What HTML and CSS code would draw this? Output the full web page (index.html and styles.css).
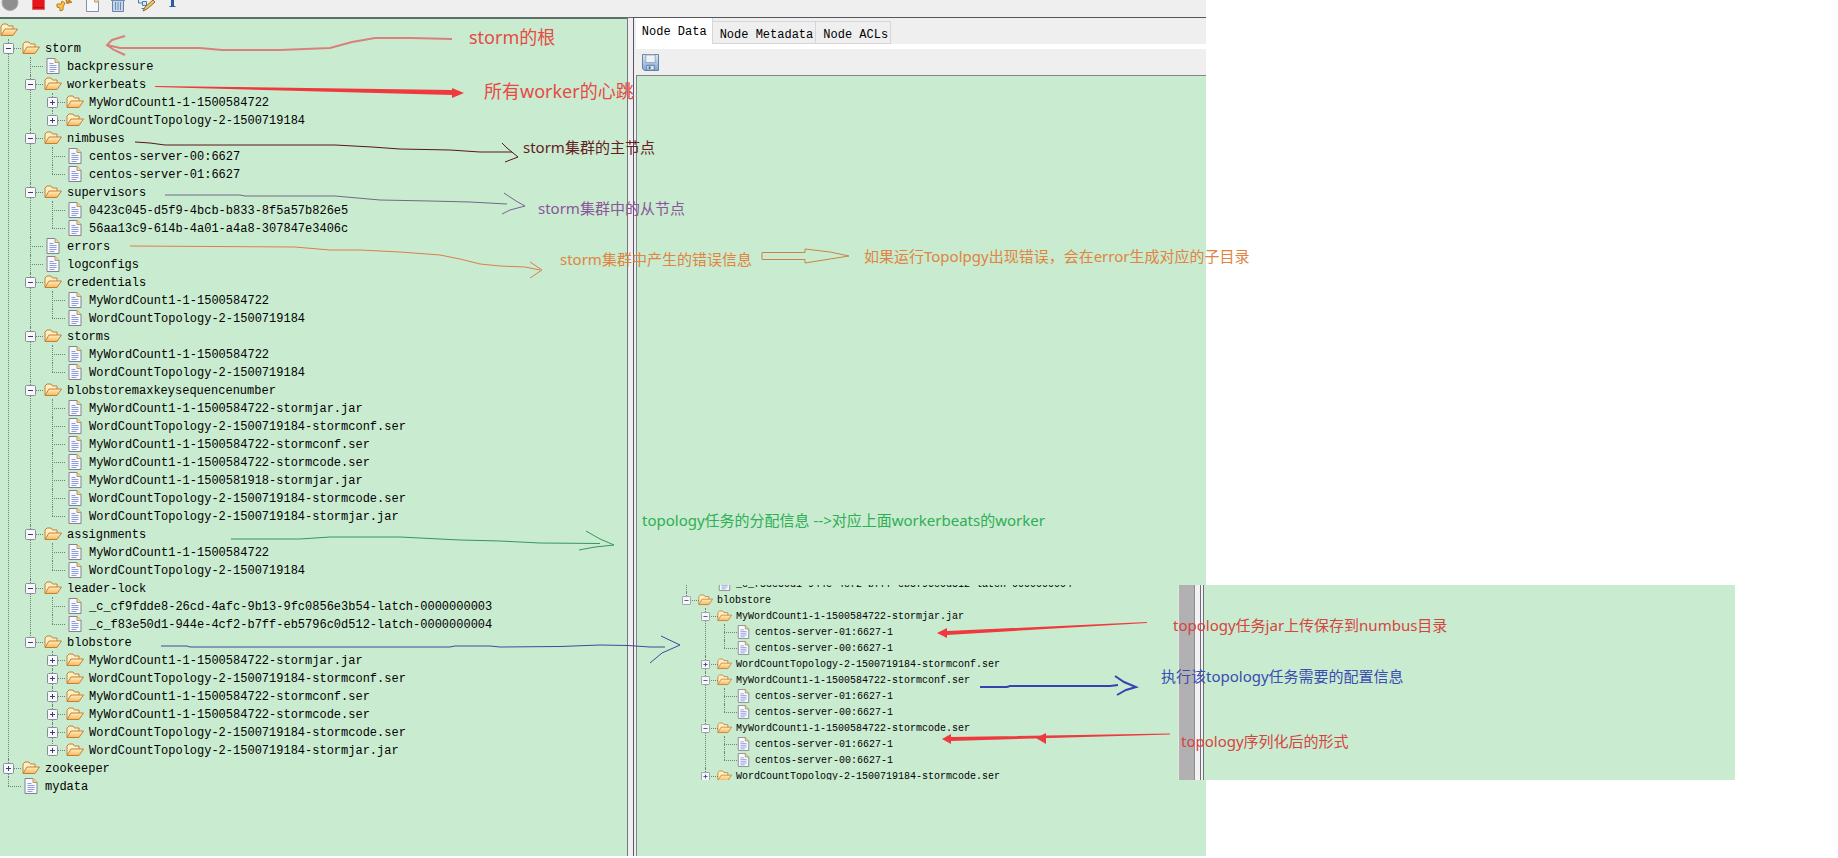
FILE: index.html
```html
<!DOCTYPE html>
<html lang="zh-CN">
<head>
<meta charset="utf-8">
<title>ZooKeeper Inspector</title>
<link rel="stylesheet" href="styles.css">
</head>
<body>
<svg class="defs" aria-hidden="true">
  <defs>
    <linearGradient id="fold" x1="0" y1="0" x2="0" y2="1"><stop offset="0" stop-color="#fff0c0"/><stop offset="1" stop-color="#fbb659"/></linearGradient>
    <linearGradient id="disk" x1="0" y1="0" x2="0" y2="1"><stop offset="0" stop-color="#dce8f4"/><stop offset="1" stop-color="#7fa3cf"/></linearGradient>
    <symbol id="folder" viewBox="0 0 18 14">
      <path d="M1 12V3l2-2h4l1.500 2H13v3" fill="#fff0c4" stroke="#c08038"/>
      <path d="M1 12.500 5 6h12.500L13 12.500z" fill="url(#fold)" stroke="#c08038"/>
    </symbol>
    <symbol id="file" viewBox="0 0 13 16">
      <path d="M.5.5h8l4 4v11H.5z" fill="#f8f9ff" stroke="#85818c"/>
      <path d="M8.500.5v4h4" fill="#f5d68c" stroke="#b39a55"/>
      <path d="M3 5.500h4M3 7.500h7M3 9.500h7M3 11.500h7M3 13.500h5" stroke="#8f9cdd"/>
    </symbol>
  </defs>
</svg>
<main class="stage">
  <section class="app">
    <header class="toolbar">
      <button class="tool" aria-label="Connect"><svg viewBox="0 0 20 12"><circle cx="10" cy="2.500" r="8" fill="#8f8f8f" stroke="#a8a8a8"/></svg></button>
      <button class="tool" aria-label="Disconnect"><svg viewBox="0 0 20 12"><path d="M5.500-3h12V9.500h-12z" fill="#e8161c" stroke="#d66"/><path d="M6 7.500h11" stroke="#b50d12"/></svg></button>
      <button class="tool" aria-label="Refresh"><svg viewBox="0 0 20 12"><path d="M3 4 7 4 8 1 11 3 9 7 9 10 6 11 6 8 3 7z" fill="#f6c34c" stroke="#bd7d1c"/><path d="M12-1l1 4 5-1M14 2l4-4" fill="#f6c34c" stroke="#bd7d1c" stroke-width="1.500"/></svg></button>
      <button class="tool" aria-label="New node"><svg viewBox="0 0 20 12"><path d="M5.500-3h8l4 4v10.500h-12z" fill="#f5f8ff" stroke="#8d8f9e"/><path d="M13.500-2v4h4" fill="#f7d26b" stroke="#c6a24c"/></svg></button>
      <button class="tool" aria-label="Delete node"><svg viewBox="0 0 20 12"><path d="M4.500-2v13.500h11V-2" fill="#c6d6ec" stroke="#6a84a8"/><path d="M3 .5h14M7.500 2v8M10 2v8M12.500 2v8" stroke="#6f8cb5"/></svg></button>
      <button class="tool" aria-label="Edit viewers"><svg viewBox="0 0 20 12"><path d="M3.500-1v4h4M7.500 1.500h4v4h-4zM6.500 8.500h3" fill="#dbe8f8" stroke="#4c79ad"/><path d="m8 11 2-4 8-7 2 2-8 7z" fill="#f2c766" stroke="#8a6a32"/></svg></button>
      <button class="tool" aria-label="About"><svg viewBox="0 0 20 12"><path d="M9-2h3v8h1.500v1h-6V6H9z" fill="#2b5c9e"/></svg></button>
    </header>
    <div class="panes">
      <nav class="pane-tree" aria-label="Nodes"><div class="root-row"><svg class="folder"><use href="#folder"/></svg></div><ul class="tree" id="main-tree"></ul></nav>
      <div class="splitter"></div>
      <section class="detail">
        <div class="tabs" role="tablist">
          <button class="tab active" role="tab" aria-selected="true">Node Data</button>
          <button class="tab" role="tab" aria-selected="false">Node Metadata</button>
          <button class="tab" role="tab" aria-selected="false">Node ACLs</button>
        </div>
        <div class="strip"></div>
        <div class="actions"><button class="save" aria-label="Save"><svg viewBox="0 0 18 18"><path d="M.5.5h17v17H2.500l-2-2z" fill="url(#disk)" stroke="#5a7ba6"/><path d="M4 1h10v8H4z" fill="#eef2f2" stroke="#8fa9c6"/><path d="M5 12h8v5H5z" fill="#dbe5f0" stroke="#5a7ba6"/><path d="M7 13h2v3H7z" fill="#456b9a"/></svg></button></div>
        <div class="editor"></div>
      </section>
    </div>
  </section>

  <section class="inset">
    <ul class="tree small" id="inset-tree"></ul>
    <div class="scrollbar"></div>
    <div class="inset-split"></div>
    <div class="inset-body"></div>
  </section>

  <svg class="ink" aria-hidden="true">
    <g fill="none">
      <path stroke="#d9807c" stroke-width="2" d="M452 39 412 38H375L352 42 330 48 280 50H222L200 48H120L107 45M125 36 112 40 107 45 114 50 125 55"/>
      <path stroke="#5c1419" d="M135 142 150 143 165 145H335L372 147 400 149 450 150 480 152H512M502 143 507 148 518 157 505 162"/>
      <path stroke="#6f6a86" d="M165 195H240L245 196H335L380 200 430 201 470 202 507 204"/>
      <path stroke="#7a6390" d="M504 193 516 201 525 206 510 210 502 214"/>
      <path stroke="#dd7d49" d="M130 246 295 247 330 250H360L400 252 440 255 460 259 480 264 500 266 525 267 540 270M530 262 542 270 530 278"/>
      <path stroke="#c98445" d="M762 252.500H805V249L830 252 849 256 830 259 805 263V259.500H762z"/>
      <path stroke="#34985a" d="M231 539H300L330 537H400L460 540 500 541 540 543 600 543.500M586 531 600 539 614 545 595 547 579 550"/>
      <path stroke="#3a4c9c" d="M161 646H187L190 647H450L455 646H490L500 647 560 646.500 600 645 628 645.500 650 647H665M661 636 680 645 662 653 650 663"/>
      <path stroke="#3443b3" stroke-width="2" d="M980 687H1007L1010 686H1110L1118 685M1115 676 1124 682 1136 687 1126 690 1117 695"/>
    </g>
    <g fill="#ee3a3e">
      <path d="m155 86 297 4v-2l12 5-12 5v-3L155 87z"/>
      <path d="m937 633 10-5v3l200-9v1l-200 12v3z"/>
      <path d="m942 739 9-5v3l219-3.500v1L951 741v3z"/>
      <path d="m1036 738 10-5v11z"/>
    </g>
  </svg>
  <p class="note big red n-root">storm的根</p>
  <p class="note big red n-beats">所有worker的心跳</p>
  <p class="note maroon n-nimbus">storm集群的主节点</p>
  <p class="note purple n-super">storm集群中的从节点</p>
  <p class="note orange n-errors">storm集群中产生的错误信息</p>
  <p class="note orange n-topo">如果运行Topolpgy出现错误，会在error生成对应的子目录</p>
  <p class="note green n-assign">topology任务的分配信息 --&gt;对应上面workerbeats的worker</p>
  <p class="note crimson n-jar">topology任务jar上传保存到numbus目录</p>
  <p class="note blue n-conf">执行该topology任务需要的配置信息</p>
  <p class="note crimson n-code">topology序列化后的形式</p>
</main>
<script src="tree.js"></script>
</body>
</html>
```
FILE: styles.css
```css
* { box-sizing: border-box; }
body { margin: 0; background: #fff; font-family: "Liberation Mono", "DejaVu Sans Mono", monospace; font-size: 12px; color: #000; }
button { margin: 0; padding: 0; border: 0; background: none; font: inherit; color: inherit; }
ul { list-style: none; margin: 0; padding: 0; }
.defs { position: absolute; width: 0; height: 0; }
.stage { position: relative; min-height: 100vh; overflow: hidden; }

.app { display: flex; flex-direction: column; width: 65.6%; min-height: calc(100vh - 2px); background: #efefef; }
.toolbar { display: flex; gap: 7px; height: 17px; overflow: hidden; }
.tool { width: 20px; height: 12px; }
.tool svg { display: block; width: 20px; height: 12px; }

.panes { display: grid; grid-template-columns: 628fr 5px 573fr; flex: 1; }
.pane-tree { background: #c9ebd0; border-top: 2px solid #5f6f68; border-right: 1px solid #77777f; padding-top: 2px; }
.splitter { border-top: 1px solid #66666c; }
.detail { display: flex; flex-direction: column; border-top: 1px solid #55555c; border-left: 1px solid #5d5068; padding-left: 2px; }
.tabs { display: flex; align-items: flex-end; height: 26px; background: #efefef; }
.tab { height: 23px; padding: 4px 2px 0 7px; border: 1px solid #d5d5da; border-left: 0; }
.tab.active { height: 26px; padding: 2px 5px 0 6px; background: #fff; border-width: 0 1px 0 0; }
.strip { height: 5px; background: #fff; }
.actions { display: flex; align-items: center; height: 26px; padding-left: 6px; }
.save, .save svg { display: block; width: 17px; height: 17px; }
.editor { flex: 1; background: #c9ebd0; border-top: 1px solid #81848b; border-left: 1px solid #81848b; }

.root-row { display: flex; align-items: center; height: 18px; }
.folder { display: block; width: 18px; height: 14px; }
.file { display: block; width: 18px; height: 16px; }
.tree { --row: 18px; --line: 20px; --mid: 9px; --indent: 22px; --box: 11px; --lead: 3px; --gap: 8px; --text: 5px; --axis: 8px; }
.tree ul { padding-left: var(--indent); }
.tree li { position: relative; }
.tree li::before { content: ""; position: absolute; left: var(--axis); top: 0; bottom: 0; border-left: 1px dotted #6f8476; }
.tree li:last-child::before { bottom: auto; height: var(--mid); }
.row { position: relative; display: flex; align-items: center; height: var(--row); padding-left: var(--lead); white-space: nowrap; }
.row::before { content: ""; position: absolute; left: var(--axis); top: var(--mid); width: 13px; border-top: 1px dotted #6f8476; }
.toggle { position: relative; display: block; width: var(--box); height: var(--box); margin-right: var(--gap); }
.toggle svg { display: block; width: var(--box); height: var(--box); }
.row .name { padding: 2px 0 0 var(--text); line-height: var(--row); }
.small { --row: 16px; --mid: 8px; --indent: 19px; --box: 9px; --lead: 0px; --gap: 7px; --text: 4px; --axis: 4px; font-size: 10px; }
.small .folder { width: 15px; height: 12px; }
.small .file { width: 15px; height: 14px; }

.inset { position: absolute; left: 682px; top: 585px; display: flex; width: 1053px; height: 195px; overflow: hidden; background: #c9ebd0; }
.inset .tree { width: 496px; margin-top: -9px; }
.scrollbar { width: 16px; background: #b1b1b1; border-left: 1px solid #e6e6e6; }
.inset-split { width: 10px; background: #f3f1f4; border-left: 1px solid #8b8b90; border-right: 4px double #6f6f78; }
.inset-body { flex: 1; }

.ink { position: absolute; left: 0; top: 0; width: 100%; height: 100%; pointer-events: none; }
.note { position: absolute; margin: 0; font: 15px/20px "Noto Sans", "Noto Sans CJK SC", sans-serif; white-space: nowrap; }
.big { font-size: 18px; line-height: 24px; }
.red { color: #e64a45; }
.crimson { color: #d6443f; }
.maroon { color: #651c22; }
.purple { color: #8a559b; }
.orange { color: #e0843f; }
.green { color: #2fae55; }
.blue { color: #3a4db0; }
.n-root { left: 469px; top: 25px; }
.n-beats { left: 484px; top: 79px; }
.n-nimbus { left: 523px; top: 137px; }
.n-super { left: 538px; top: 198px; }
.n-errors { left: 560px; top: 249px; }
.n-topo { left: 864px; top: 246px; }
.n-assign { left: 642px; top: 510px; }
.n-jar { left: 1173px; top: 615px; }
.n-conf { left: 1161px; top: 666px; }
.n-code { left: 1181px; top: 731px; }
```
FILE: tree.js
```js
const MY = "MyWordCount1-1-1500584722";
const WC = "WordCountTopology-2-1500719184";

// Node: [name, kind, children]; kind "f" = file, "+" = closed folder, "-" = open folder.
const file = name => [name, "f"];
const closed = name => [name, "+"];
const open = (name, ...kids) => [name, "-", kids];

const mainTree = [
  open("storm",
    file("backpressure"),
    open("workerbeats", closed(MY), closed(WC)),
    open("nimbuses", file("centos-server-00:6627"), file("centos-server-01:6627")),
    open("supervisors", file("0423c045-d5f9-4bcb-b833-8f5a57b826e5"), file("56aa13c9-614b-4a01-a4a8-307847e3406c")),
    file("errors"),
    file("logconfigs"),
    open("credentials", file(MY), file(WC)),
    open("storms", file(MY), file(WC)),
    open("blobstoremaxkeysequencenumber",
      file(MY + "-stormjar.jar"), file(WC + "-stormconf.ser"), file(MY + "-stormconf.ser"),
      file(MY + "-stormcode.ser"), file("MyWordCount1-1-1500581918-stormjar.jar"),
      file(WC + "-stormcode.ser"), file(WC + "-stormjar.jar")),
    open("assignments", file(MY), file(WC)),
    open("leader-lock",
      file("_c_cf9fdde8-26cd-4afc-9b13-9fc0856e3b54-latch-0000000003"),
      file("_c_f83e50d1-944e-4cf2-b7ff-eb5796c0d512-latch-0000000004")),
    open("blobstore",
      closed(MY + "-stormjar.jar"), closed(WC + "-stormconf.ser"), closed(MY + "-stormconf.ser"),
      closed(MY + "-stormcode.ser"), closed(WC + "-stormcode.ser"), closed(WC + "-stormjar.jar"))),
  closed("zookeeper"),
  file("mydata")
];

const servers = () => [file("centos-server-01:6627-1"), file("centos-server-00:6627-1")];
const insetTree = [
  [null, "-", [file("_c_f83e50d1-944e-4cf2-b7ff-eb5796c0d512-latch-0000000004")]],
  open("blobstore",
    open(MY + "-stormjar.jar", ...servers()),
    closed(WC + "-stormconf.ser"),
    open(MY + "-stormconf.ser", ...servers()),
    open(MY + "-stormcode.ser", ...servers()),
    closed(WC + "-stormcode.ser"))
];

function render([name, kind, kids]) {
  const plus = kind === "+" ? "M5.5 3v5" : "";
  const toggle = kind === "f"
    ? '<span class="toggle"></span>'
    : `<button class="toggle" aria-label="Toggle ${name}"><svg viewBox="0 0 11 11"><rect x=".5" y=".5" width="10" height="10" rx="1" fill="#f8f8fb" stroke="#8b8b99"/><path d="M3 5.5h5${plus}" stroke="#33407c"/></svg></button>`;
  const icon = kind === "f" ? "file" : "folder";
  const row = name === null ? "" :
    `<div class="row">${toggle}<svg class="${icon}"><use href="#${icon}"/></svg><span class="name">${name}</span></div>`;
  return `<li>${row}${kids ? `<ul>${kids.map(render).join("")}</ul>` : ""}</li>`;
}

document.getElementById("main-tree").innerHTML = mainTree.map(render).join("");
document.getElementById("inset-tree").innerHTML = insetTree.map(render).join("");
```
